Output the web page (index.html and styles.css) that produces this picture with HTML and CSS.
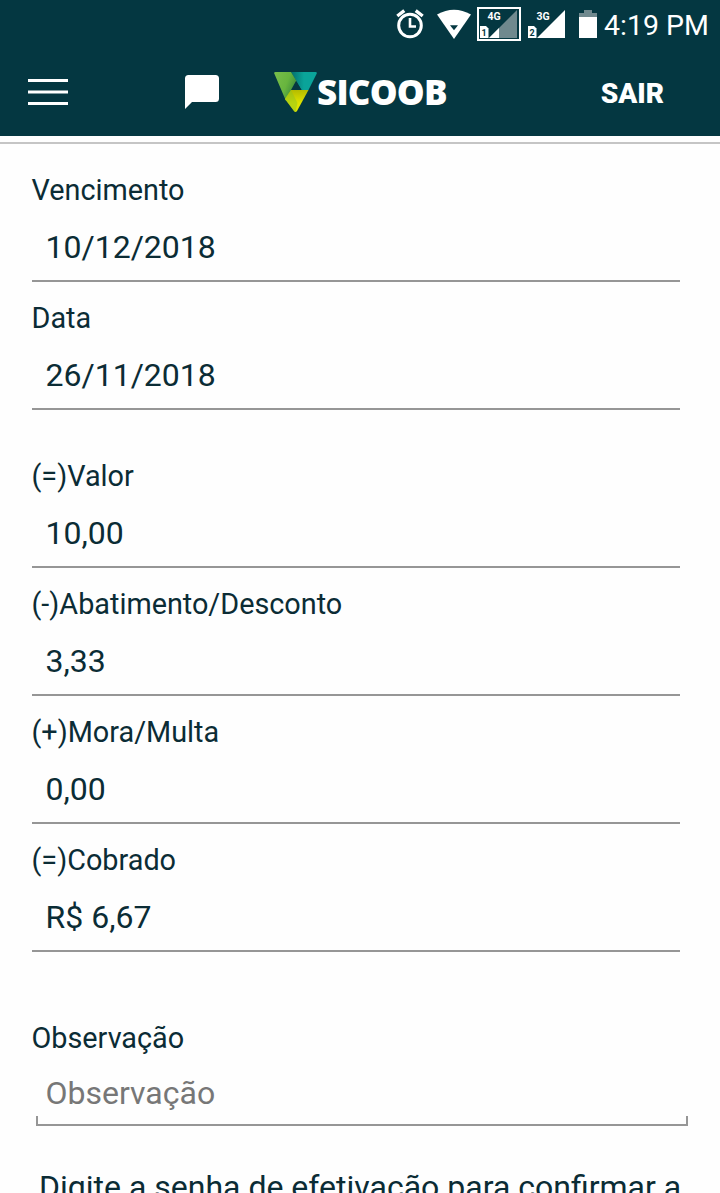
FILE: index.html
```html
<!DOCTYPE html>
<html lang="pt-BR">
  <head>
    <meta charset="UTF-8" />
    <meta name="viewport" content="width=device-width,initial-scale=1.0" />
    <title>Sicoob</title>
    <link rel="stylesheet" href="styles.css">
  </head>
  <body>
    <header class="header">
      <div class="status-bar">
        <svg class="status-icons" width="204" height="50" viewBox="396 0 204 50">
          <!-- alarm -->
          <g fill="none" stroke="#fff">
            <circle cx="410" cy="25.5" r="11.3" stroke-width="3" />
            <path d="M410 18v8.5h6" stroke-width="2.6" />
            <path d="M397.3 16l7-5.3M422.7 16l-7-5.3" stroke-width="3.4" />
          </g>
          <!-- wifi -->
          <path d="M437 14.5q17-9.5 34 0L454 39z" fill="#fff" />
          <path d="M450 25.3h8l-4 5z" fill="#043741" />
          <!-- sim 1 -->
          <rect x="478" y="8" width="42" height="32" fill="none" stroke="#fff" stroke-width="2" />
          <path d="M517 10v28h-28z" fill="#70898e" />
          <path d="M499 28v10h-10z" fill="#fff" />
          <path d="M480 26h6l2.500 2.500V38H480z" fill="#fff" />
          <text x="481.500" y="36" class="sim-number">1</text>
          <text x="487.500" y="20" class="network">4G</text>
          <!-- sim 2 -->
          <path d="M565 10v28h-28z" fill="#fff" />
          <path d="M528 26h6l2.500 2.500V38H528z" fill="#fff" />
          <text x="529.500" y="36" class="sim-number">2</text>
          <text x="536.500" y="20" class="network">3G</text>
          <!-- battery -->
          <path d="M584 10h8v3h5v5h-18v-5h5z" fill="#70898e" />
          <path d="M579 17h18v21h-18z" fill="#fff" />
        </svg>
        <span class="clock">4:19 PM</span>
      </div>
      <nav class="top-menu">
        <svg class="menu-icon" width="40" height="26" viewBox="0 0 40 26">
          <path d="M0 1.500h40M0 13h40M0 24.500h40" stroke="#fff" stroke-width="3" />
        </svg>
        <svg class="chat-icon" width="34" height="34" viewBox="0 0 34 34">
          <path d="M3.500 0h27q3.500 0 3.500 3.500v20q0 3.500-3.500 3.500H7L0 34V3.500Q0 0 3.500 0z" fill="#fff" />
        </svg>
        <div class="logo">
          <svg class="logo-mark" width="44" height="40" viewBox="0 0 44 40">
            <defs>
              <linearGradient id="teal" x1="0" x2="1">
                <stop offset="0" stop-color="#046d6c" />
                <stop offset=".5" stop-color="#0aa49a" />
              </linearGradient>
              <linearGradient id="green" x1="0" y1="0" x2="1" y2=".5">
                <stop offset="0" stop-color="#78be4b" />
                <stop offset=".6" stop-color="#68b53e" />
                <stop offset="1" stop-color="#3c8c3c" />
              </linearGradient>
              <linearGradient id="lime" x1="0" y1="0" x2="0" y2="1">
                <stop offset="0" stop-color="#b4bb00" />
                <stop offset=".6" stop-color="#dfe300" />
              </linearGradient>
            </defs>
            <path d="M17 0h24.500q2 0 1 2l-8 16h-7z" fill="url(#teal)" />
            <path d="M1.500 0H17l5.500 9L12 29 .5 2Q-.5 0 1.500 0z" fill="url(#green)" />
            <path d="M17 18h17.500L23 39q-1.500 2-3 0L11 27z" fill="url(#lime)" />
            <path d="M17 18l-6 9 9 12q1 1 1.500 1l2-9z" fill="#8fc31f" opacity=".5" />
            <path d="M22 9l5.500 9H17z" fill="#043741" />
          </svg>
          <span class="logo-text">SICOOB</span>
        </div>
        <a class="logout" href="#">SAIR</a>
      </nav>
    </header>
    <main class="content">
      <div class="field">
        <div class="field-label">Vencimento</div>
        <div class="field-value">10/12/2018</div>
      </div>
      <div class="field group-end">
        <div class="field-label">Data</div>
        <div class="field-value">26/11/2018</div>
      </div>
      <div class="field">
        <div class="field-label">(=)Valor</div>
        <div class="field-value">10,00</div>
      </div>
      <div class="field">
        <div class="field-label">(-)Abatimento/Desconto</div>
        <div class="field-value">3,33</div>
      </div>
      <div class="field">
        <div class="field-label">(+)Mora/Multa</div>
        <div class="field-value">0,00</div>
      </div>
      <div class="field">
        <div class="field-label">(=)Cobrado</div>
        <div class="field-value">R$ 6,67</div>
      </div>
      <div class="note">
        <label class="field-label" for="note">Observação</label>
        <input class="note-input" id="note" type="text" placeholder="Observação" />
        <div class="note-line"></div>
      </div>
      <p class="hint">Digite a senha de efetivação para confirmar a</p>
    </main>
  </body>
</html>
```

FILE: styles.css
```css
body {
  margin: 0;
  height: 1193px;
  overflow: hidden;
  background-color: #fefefe;
  color: #0b2c35;
  font-family: Roboto, sans-serif;
}
.header {
  height: 136px;
  background-color: #043741;
  color: white;
}
.status-bar {
  display: flex;
  height: 50px;
  padding-left: 396px;
}
.status-icons {
  flex: none;
}
.network {
  font: bold 10.5px Roboto, sans-serif;
  fill: white;
}
.sim-number {
  font: bold 9px Roboto, sans-serif;
  fill: #043741;
}
.clock {
  margin-left: 4px;
  font-size: 28.5px;
  line-height: 52px;
  white-space: nowrap;
}
.top-menu {
  display: flex;
  align-items: flex-start;
  padding: 22px 56px 0 28px;
}
.menu-icon {
  margin-top: 7px;
}
.chat-icon {
  margin-top: 3px;
  margin-left: 117px;
}
.logo {
  display: flex;
  margin-left: 55px;
}
.logo-text {
  margin-left: -1px;
  font: 800 35px/40px "Open Sans", sans-serif;
  letter-spacing: -0.8px;
}
.logout {
  margin-left: auto;
  color: white;
  font-size: 28px;
  font-weight: 900;
  line-height: 43px;
  text-decoration: none;
}
.content {
  margin-top: 6px;
  padding: 26px 32px 0;
  border-top: 2px solid #c5c5c5;
}
.field {
  height: 110px;
  width: 648px;
  margin-bottom: 16px;
  border-bottom: 2px solid #969696;
}
.group-end {
  margin-bottom: 46px;
}
.field-label {
  display: block;
  margin-left: -0.5px;
  font-size: 28.8px;
  line-height: 40px;
}
.field-value {
  margin-top: 17px;
  padding-left: 13.5px;
  font-size: 32px;
  line-height: 40px;
}
.note {
  padding-top: 50px;
}
.note-input {
  display: block;
  box-sizing: border-box;
  width: 652px;
  height: 40px;
  margin: 15px 0 0;
  padding: 0 13.5px;
  border: none;
  background: none;
  font-family: Roboto, sans-serif;
  font-size: 32px;
}
.note-input::placeholder {
  color: #777;
}
.note-line {
  box-sizing: border-box;
  width: 652px;
  height: 10px;
  margin: 3px 0 0 4px;
  border: 2px solid #969696;
  border-top: none;
}
.hint {
  margin: 41px 0 0 7px;
  font-size: 32px;
  line-height: 40px;
  white-space: nowrap;
}
```
